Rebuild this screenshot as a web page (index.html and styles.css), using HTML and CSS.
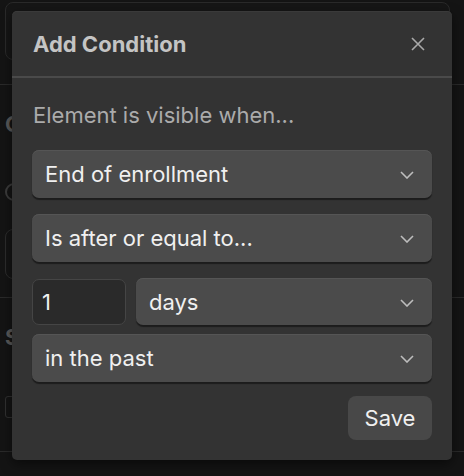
FILE: index.html
```html
<!DOCTYPE html>
<html>
<head>
<meta charset="utf-8">
<link rel="stylesheet" href="styles.css">
</head>
<body>
<div class="page">
  <div class="topbox"></div>
  <div class="rule rule-a"></div>
  <div class="section">
    <div class="ghost-h">Conditions</div>
    <div class="ghost-radio"></div>
    <div class="ghost-input"></div>
  </div>
  <div class="rule"></div>
  <div class="section">
    <div class="ghost-h ghost-s">Settings</div>
    <div class="ghost-check"></div>
  </div>
  <div class="rule"></div>
</div>

<div class="modal">
  <div class="modal-head">
    <div class="title">Add Condition</div>
    <svg class="close" width="14" height="14" viewBox="0 0 14 14"><path d="M1 1 L13 13 M13 1 L1 13" stroke="#a9a9a9" stroke-width="1.6" fill="none"/></svg>
  </div>
  <div class="modal-body">
    <div class="lead">Element is visible when...</div>
    <div class="select"><span>End of enrollment</span><svg class="chev" width="14" height="8" viewBox="0 0 14 8"><path d="M1 1 L7 7 L13 1" stroke="#bdbdbd" stroke-width="1.6" fill="none"/></svg></div>
    <div class="select"><span>Is after or equal to...</span><svg class="chev" width="14" height="8" viewBox="0 0 14 8"><path d="M1 1 L7 7 L13 1" stroke="#bdbdbd" stroke-width="1.6" fill="none"/></svg></div>
    <div class="row">
      <div class="num">1</div>
      <div class="select grow"><span>days</span><svg class="chev" width="14" height="8" viewBox="0 0 14 8"><path d="M1 1 L7 7 L13 1" stroke="#bdbdbd" stroke-width="1.6" fill="none"/></svg></div>
    </div>
    <div class="select tight"><span>in the past</span><svg class="chev" width="14" height="8" viewBox="0 0 14 8"><path d="M1 1 L7 7 L13 1" stroke="#bdbdbd" stroke-width="1.6" fill="none"/></svg></div>
    <div class="actions"><button class="save">Save</button></div>
  </div>
</div>
</body>
</html>
```

FILE: styles.css
```css
html, body {
  margin: 0;
  padding: 0;
  background: #141414;
  width: 464px;
  height: 476px;
  overflow: hidden;
  font-family: Inter, "Noto Sans", sans-serif;
}

.page {
  display: flex;
  flex-direction: column;
  padding-top: 2px;
}

.topbox {
  margin-left: 5px;
  width: 445px;
  height: 58px;
  box-sizing: border-box;
  border: 1.5px solid #2a2a2a;
  border-radius: 8px;
  background: #161616;
}

.rule {
  height: 1px;
  background: #2a2a2a;
}
.rule-a { margin-top: 24px; }

.section {
  display: flex;
  flex-direction: column;
  padding-left: 5px;
  width: 40px;
  overflow: hidden;
}

.ghost-h {
  color: #5a5a5a;
  font-weight: 700;
  font-size: 22px;
  line-height: 26px;
  margin-top: 26px;
  height: 26px;
  white-space: nowrap;
}

.ghost-radio {
  width: 18px;
  height: 18px;
  box-sizing: border-box;
  border: 2px solid #3c3c3c;
  border-radius: 50%;
  margin-top: 46px;
}

.ghost-input {
  width: 440px;
  height: 50px;
  box-sizing: border-box;
  border: 1.5px solid #2c2c2c;
  border-radius: 8px;
  margin-top: 28px;
  margin-bottom: 18px;
}

.ghost-s {
  margin-top: 26px;
}

.ghost-check {
  width: 20px;
  height: 22px;
  box-sizing: border-box;
  border: 1.5px solid #303030;
  border-radius: 3px;
  margin-top: 46px;
  margin-bottom: 33px;
}

.modal {
  position: absolute;
  left: 12px;
  top: 11px;
  width: 440px;
  height: 449px;
  background: #333333;
  border-radius: 5px;
  box-shadow: 0 1px 0 #3a3a3a inset, 0 4px 12px rgba(0,0,0,0.5);
  display: flex;
  flex-direction: column;
}

.modal-head {
  height: 65px;
  display: flex;
  align-items: center;
  justify-content: space-between;
  padding: 0 27px 0 21px;
  border-bottom: 2px solid #4a4a4a;
}

.title {
  color: #c4c4c4;
  font-weight: 700;
  font-size: 22px;
  line-height: 26px;
}

.close {
  display: block;
}

.modal-body {
  padding: 0 20px;
  display: flex;
  flex-direction: column;
}

.lead {
  color: #ababab;
  font-size: 22px;
  line-height: 26px;
  margin-top: 24px;
  margin-bottom: 22px;
  padding-left: 1px;
}

.select {
  height: 48px;
  box-sizing: border-box;
  background: #4b4b4b;
  border-radius: 7px;
  box-shadow: 0 1.5px 1px rgba(0,0,0,0.45), inset 0 1px 0 #555;
  display: flex;
  align-items: center;
  justify-content: space-between;
  padding: 0 18px 0 13px;
  color: #f0f0f0;
  font-size: 22px;
  line-height: 26px;
  margin-bottom: 16px;
}

.select .chev {
  display: block;
  margin-top: 2px;
}

.row {
  display: flex;
  gap: 10px;
  margin-bottom: 9px;
}

.row .select {
  margin-bottom: 0;
  height: 47px;
}

.grow {
  flex: 1;
}

.num {
  width: 94px;
  height: 46px;
  box-sizing: border-box;
  background: #2a2a2a;
  border: 1.5px solid #454545;
  border-radius: 7px;
  color: #f0f0f0;
  font-size: 22px;
  display: flex;
  align-items: center;
  padding-left: 9px;
  margin-top: 1px;
}

.tight {
  margin-bottom: 14px;
}

.actions {
  display: flex;
  justify-content: flex-end;
}

.save {
  width: 84px;
  height: 44px;
  border: none;
  border-radius: 8px;
  background: #484848;
  color: #f0f0f0;
  font-family: Inter, "Noto Sans", sans-serif;
  font-size: 22px;
  padding: 0;
}
```
